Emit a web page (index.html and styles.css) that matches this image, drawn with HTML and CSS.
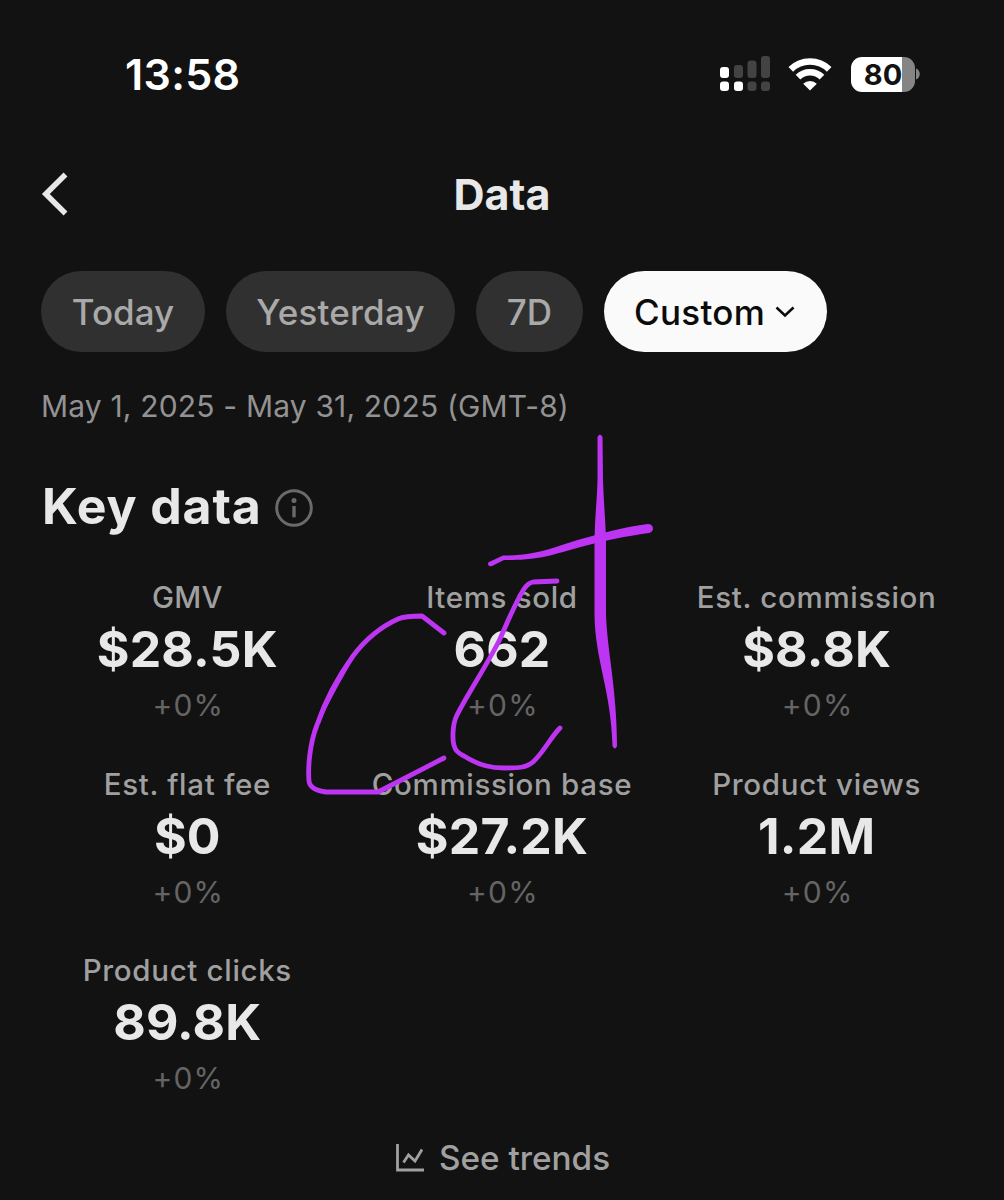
FILE: index.html
```html
<!DOCTYPE html>
<html lang="en">
<head>
<meta charset="utf-8">
<title>Data</title>
<link rel="stylesheet" href="styles.css">
</head>
<body>
<main class="screen">
  <div class="status">
    <span class="time">13:58</span>
    <div class="indicators">
      <svg class="signal" width="50" height="36" viewBox="0 0 50 36">
        <g fill="#fff"><rect x="0" y="11" width="9" height="11" rx="3"/><rect x="0" y="25.500" width="9" height="9.500" rx="3"/><rect x="14" y="25.500" width="9" height="9.500" rx="3"/></g>
        <g fill="#434343"><rect x="14" y="9" width="9" height="13" rx="3"/><rect x="27.500" y="4.500" width="9" height="17.500" rx="3"/><rect x="41" y="0" width="9" height="22" rx="3"/><rect x="27.500" y="25.500" width="9" height="9.500" rx="3"/><rect x="41" y="25.500" width="9" height="9.500" rx="3"/></g>
      </svg>
      <svg class="wifi" width="44" height="34" viewBox="0 0 44 34">
        <g fill="none" stroke="#fff" stroke-width="6.600"><path d="M2.800 12.300a27.500 27.500 0 0 1 38.400 0"/><path d="M10 20.200a17 17 0 0 1 24 0"/></g>
        <path d="M22 33.500l-6.800-6.700a9.800 9.800 0 0 1 13.600 0z" fill="#fff"/>
      </svg>
      <div class="battery"><span class="level">80</span></div>
      <svg class="nub" width="5" height="12" viewBox="0 0 5 12"><path d="M0 0.500C5 2 5 10 0 11.500z" fill="#858585"/></svg>
    </div>
  </div>

  <header class="header">
    <svg class="back" width="28" height="46" viewBox="0 0 28 46"><path d="M24.500 3.500L4.800 23l19.700 19.500" fill="none" stroke="#e8e8e8" stroke-width="5.500" stroke-linecap="butt"/></svg>
    <h1 class="title">Data</h1>
  </header>

  <nav class="tabs">
    <button class="tab today">Today</button>
    <button class="tab yesterday">Yesterday</button>
    <button class="tab week">7D</button>
    <button class="tab custom">Custom<svg width="20" height="12" viewBox="0 0 20 12"><path d="M1.500 1.500L10 9.500l8.500-8" fill="none" stroke="#0b0b0b" stroke-width="2.500"/></svg></button>
  </nav>

  <p class="range">May 1, 2025 - May 31, 2025 (GMT-8)</p>

  <div class="section">
    <h2 class="heading">Key data</h2>
    <svg width="38" height="38" viewBox="0 0 38 38"><circle cx="19" cy="19" r="17.300" fill="none" stroke="#6a6a6a" stroke-width="3"/><circle cx="19" cy="11.500" r="2.500" fill="#6a6a6a"/><path d="M19 17v11.300" stroke="#6a6a6a" stroke-width="3.400"/></svg>
  </div>

  <section class="metrics">
    <div class="metric"><span class="label gmv">GMV</span><strong class="value">$28.5K</strong><span class="delta">+0%</span></div>
    <div class="metric"><span class="label">Items sold</span><strong class="value">662</strong><span class="delta">+0%</span></div>
    <div class="metric"><span class="label">Est. commission</span><strong class="value">$8.8K</strong><span class="delta">+0%</span></div>
    <div class="metric"><span class="label">Est. flat fee</span><strong class="value">$0</strong><span class="delta">+0%</span></div>
    <div class="metric"><span class="label">Commission base</span><strong class="value">$27.2K</strong><span class="delta">+0%</span></div>
    <div class="metric"><span class="label">Product views</span><strong class="value">1.2M</strong><span class="delta">+0%</span></div>
    <div class="metric"><span class="label">Product clicks</span><strong class="value">89.8K</strong><span class="delta">+0%</span></div>
  </section>

  <a class="trends">
    <svg width="28" height="28" viewBox="0 0 28 28"><path d="M1.500 0v26H28" fill="none" stroke="#a0a0a0" stroke-width="2.800"/><path d="M7.500 18.500l5-7.500 6.500 6 7-11.500" fill="none" stroke="#a0a0a0" stroke-width="2.800"/></svg>
    <span>See trends</span>
  </a>

  <svg class="ink" width="1004" height="1200" viewBox="0 0 1004 1200">
    <g fill="none" stroke="#bd35f2" stroke-width="4.800" stroke-linecap="round" stroke-linejoin="round">
      <path d="M444 633L422 616Q405 616 398 619C376 629 362 644 353 656C338 677 326 699 317 725C309 745 308 770 309 781Q310 790 326 792L378 792L444 758"/>
      <path d="M557 581L533 582Q528 583 524 589C514 605 506 626 499 641C484 670 467 695 457 715C452 725 452 742 455 748Q456 752 464 756C480 766 492 768 505 768C518 768 526 768 533 762C544 752 550 738 560 728"/>
    </g>
    <g fill="#bd35f2">
      <path d="M597.500 437Q600 432 602.500 437L603 480C603.500 500 605.500 520 606 540L606 614C607 650 617 690 617 746Q615 751 612.500 746C611 690 595 660 594.500 615L594.500 540C595 515 597 500 597.500 480z"/>
      <path d="M489 562L503 555.500C520 556 540 553 565 544C600 533 625 527 648 524Q652 524 653 528Q653 532 649 533C600 540 575 549 548 556C530 560 516 560 504 560L492 566Q488 567 488 563z"/>
      <path d="M353 653C336 676 324 698 315 725L320 724C326 706 341 681 355 656z"/>
    </g>
  </svg>
</main>
</body>
</html>
```
FILE: styles.css
```css
* { box-sizing: border-box; }
body { margin: 0; background: #121212; font-family: Inter, "Liberation Sans", sans-serif; color: #e8e8e8; }
.screen { position: relative; width: 1004px; height: 1200px; overflow: hidden; }
svg { display: block; flex: none; }
.status { display: flex; justify-content: space-between; align-items: center; height: 148px; padding: 0 83px 0 125px; }
.time { font-size: 43px; font-weight: 600; color: #fff; letter-spacing: 0.300px; }
.indicators { display: flex; align-items: center; }
.wifi { margin: 0 19px 0 18px; }
.battery { display: flex; align-items: center; justify-content: center; width: 64px; height: 35px; border-radius: 11px; background: linear-gradient(90deg, #fff 51px, #858585 51px); }
.level { font-size: 29px; font-weight: 700; line-height: 35px; color: #121212; }
.nub { margin-left: 1px; }
.header { display: grid; grid-template-columns: 28px 1fr 28px; align-items: center; height: 91px; padding: 0 43px 0 41px; }
.title { margin: 0; padding-left: 2px; text-align: center; font-size: 43px; line-height: 60px; font-weight: 700; }
.tabs { display: flex; gap: 21px; margin-top: 32px; padding-left: 41px; }
.tab { display: flex; align-items: center; justify-content: center; height: 81px; padding: 1px 0 0; border: 0; border-radius: 41px; background: #303030; color: #a9a9a9; font: 500 35px/80px Inter, sans-serif; }
.today { width: 164px; }
.yesterday { width: 229px; letter-spacing: 0.200px; }
.week { width: 107px; }
.custom { width: 223px; gap: 10px; padding-right: 2px; letter-spacing: 0.300px; background: #fafafa; color: #0b0b0b; }
.range { margin: 34px 0 0 41px; font-size: 30px; line-height: 40px; letter-spacing: 0.170px; color: #929292; white-space: nowrap; }
.section { display: flex; align-items: center; gap: 13px; height: 80px; margin: 40px 0 0 42px; }
.heading { margin: 0; font-size: 50px; line-height: 60px; letter-spacing: 0.850px; }
.section svg { margin-top: 4px; }
.metrics { display: grid; grid-template-columns: repeat(3, 1fr); row-gap: 34.500px; padding: 0 30px 0 30px; margin-top: 31px; }
.metric { display: flex; flex-direction: column; align-items: center; white-space: nowrap; }
.label { font-size: 29.500px; font-weight: 500; line-height: 40px; letter-spacing: 0.670px; color: #a0a0a0; }
.gmv { letter-spacing: 0.200px; }
.value { font-size: 50px; font-weight: 700; line-height: 64px; letter-spacing: 0.200px; }
.delta { padding-left: 2px; font-size: 30px; line-height: 48px; color: #646464; letter-spacing: 1.200px; }
.trends { display: flex; align-items: center; justify-content: center; gap: 15px; height: 44px; margin-top: 34px; padding-left: 2px; font-size: 33.300px; font-weight: 500; color: #a0a0a0; }
.ink { position: absolute; inset: 0; pointer-events: none; }
```
